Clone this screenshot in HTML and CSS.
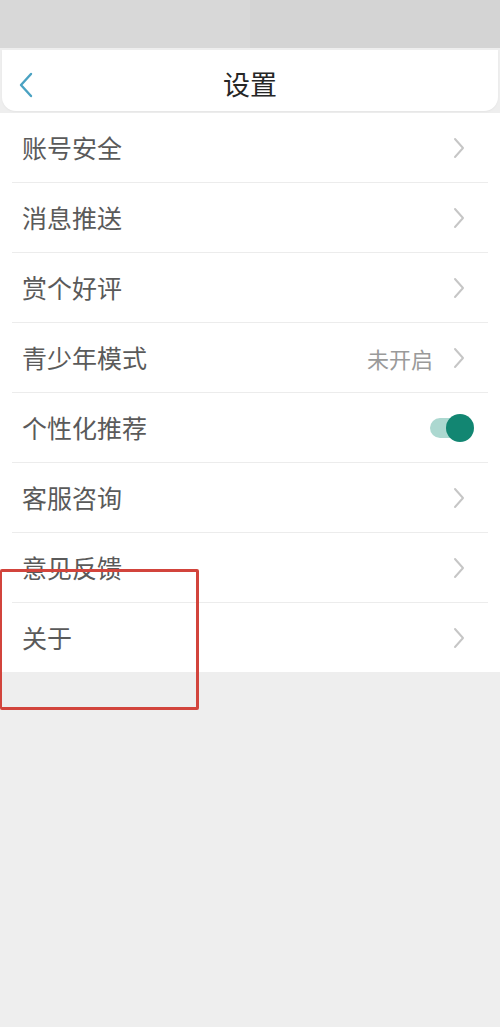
FILE: index.html
```html
<!DOCTYPE html>
<html lang="zh-CN">
<head>
<meta charset="utf-8">
<title>设置</title>
<link rel="stylesheet" href="styles.css">
</head>
<body>
<div class="statusbar"></div>
<header class="header">
  <span class="back">
    <svg width="16" height="26" viewBox="0 0 16 26"><path d="M13 2 L3 13 L13 24" fill="none" stroke="#4aa2c2" stroke-width="2.4" stroke-linecap="round" stroke-linejoin="round"/></svg>
  </span>
  <h1 class="title">设置</h1>
</header>
<ul class="list">
  <li class="row"><span class="label">账号安全</span><span class="chev"><svg width="12" height="22" viewBox="0 0 12 22"><path d="M2 2 L10 11 L2 20" fill="none" stroke="#c6c6c6" stroke-width="2" stroke-linecap="round" stroke-linejoin="round"/></svg></span></li>
  <li class="row"><span class="label">消息推送</span><span class="chev"><svg width="12" height="22" viewBox="0 0 12 22"><path d="M2 2 L10 11 L2 20" fill="none" stroke="#c6c6c6" stroke-width="2" stroke-linecap="round" stroke-linejoin="round"/></svg></span></li>
  <li class="row"><span class="label">赏个好评</span><span class="chev"><svg width="12" height="22" viewBox="0 0 12 22"><path d="M2 2 L10 11 L2 20" fill="none" stroke="#c6c6c6" stroke-width="2" stroke-linecap="round" stroke-linejoin="round"/></svg></span></li>
  <li class="row"><span class="label">青少年模式</span><span class="right"><span class="value">未开启</span><span class="chev"><svg width="12" height="22" viewBox="0 0 12 22"><path d="M2 2 L10 11 L2 20" fill="none" stroke="#c6c6c6" stroke-width="2" stroke-linecap="round" stroke-linejoin="round"/></svg></span></span></li>
  <li class="row"><span class="label">个性化推荐</span><span class="toggle"><span class="track"></span><span class="knob"></span></span></li>
  <li class="row"><span class="label">客服咨询</span><span class="chev"><svg width="12" height="22" viewBox="0 0 12 22"><path d="M2 2 L10 11 L2 20" fill="none" stroke="#c6c6c6" stroke-width="2" stroke-linecap="round" stroke-linejoin="round"/></svg></span></li>
  <li class="row"><span class="label">意见反馈</span><span class="chev"><svg width="12" height="22" viewBox="0 0 12 22"><path d="M2 2 L10 11 L2 20" fill="none" stroke="#c6c6c6" stroke-width="2" stroke-linecap="round" stroke-linejoin="round"/></svg></span></li>
  <li class="row"><span class="label">关于</span><span class="chev"><svg width="12" height="22" viewBox="0 0 12 22"><path d="M2 2 L10 11 L2 20" fill="none" stroke="#c6c6c6" stroke-width="2" stroke-linecap="round" stroke-linejoin="round"/></svg></span></li>
</ul>
<div class="highlight"></div>
</body>
</html>
```

FILE: styles.css
```css
html, body {
  margin: 0;
  padding: 0;
}
body {
  background: #eeeeee;
  font-family: "Noto Sans CJK SC", "Noto Sans", sans-serif;
  width: 500px;
  min-height: 1027px;
  position: relative;
}
.statusbar {
  height: 48px;
  background: linear-gradient(to right, #d8d8d8 0, #d8d8d8 50%, #d4d4d4 50%, #d4d4d4 100%);
}
.header {
  margin: 2px 2px 0;
  height: 61px;
  background: #ffffff;
  border-radius: 0 0 14px 14px;
  box-shadow: 0 1px 2px rgba(0,0,0,0.04);
  display: flex;
  align-items: center;
  justify-content: center;
  position: relative;
  padding-top: 6px;
  box-sizing: border-box;
}
.back {
  position: absolute;
  left: 16px;
  top: 22px;
  display: flex;
}
.title {
  margin: 0;
  font-size: 27px;
  font-weight: 400;
  color: #262626;
  line-height: 1;
}
.list {
  list-style: none;
  margin: 2px 0 0;
  padding: 0 12px;
  background: #ffffff;
}
.row {
  height: 69px;
  display: flex;
  align-items: center;
  justify-content: space-between;
  border-bottom: 1px solid #ececec;
  padding: 0 23px 0 10px;
}
.row:last-child {
  border-bottom: none;
}
.label {
  font-size: 25px;
  color: #5a5a5a;
  line-height: 1;
}
.right {
  display: flex;
  align-items: center;
  gap: 20px;
}
.value {
  font-size: 22px;
  color: #9a9a9a;
  line-height: 1;
}
.chev {
  display: flex;
}
.toggle {
  position: relative;
  width: 44px;
  height: 30px;
  margin-right: -9px;
  display: flex;
  align-items: center;
}
.track {
  display: block;
  width: 38px;
  height: 20px;
  border-radius: 10px;
  background: #acd8d0;
}
.knob {
  position: absolute;
  right: 0;
  top: 1px;
  width: 28px;
  height: 28px;
  border-radius: 50%;
  background: #128672;
}
.highlight {
  position: absolute;
  left: 0;
  top: 569px;
  width: 199px;
  height: 141px;
  border: 3px solid #d2443c;
  border-left-width: 2px;
  box-sizing: border-box;
  border-radius: 2px;
}
```
